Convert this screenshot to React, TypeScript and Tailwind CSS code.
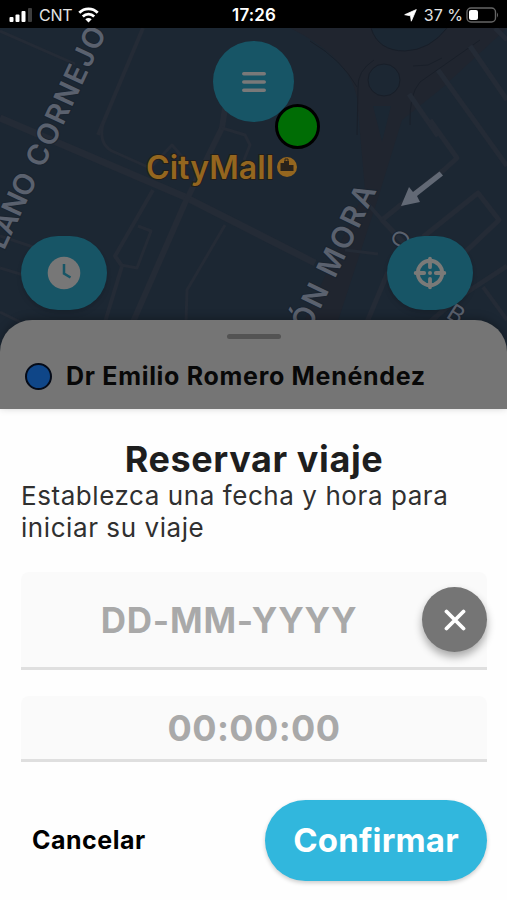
const roads = [
  { d: "M0 31L75 64", w: 3 },
  { d: "M143 28L98 135", w: 4 },
  { d: "M0 118L185 197L315 263", w: 7 },
  { d: "M345 250L378 254", w: 3 },
  { d: "M104 120Q97 143 112 151L150 168L172 145L192 168", w: 3 },
  { d: "M225 108L222 128L185 203L133 322", w: 6 },
  { d: "M222 128L245 135L250 145L244 160", w: 3 },
  { d: "M153 190L115 256L122 266L105 322", w: 4 },
  { d: "M138 226L151 231L137 268L121 265", w: 3 },
  { d: "M225 225L187 290L186 322", w: 3 },
  { d: "M0 236L42 250M0 268L30 277M0 312L20 322", w: 3 },
  { d: "M409 94L438 136", w: 5 },
  { d: "M438 70L507 166", w: 5 },
  { d: "M470 46L507 100", w: 5 },
  { d: "M430 120L457 158L445 169L382 220L404 243", w: 5 },
  { d: "M382 220L366 202", w: 4 },
  { d: "M423 237L478 193L499 220L461 256", w: 5 },
  { d: "M507 266L455 300L430 322", w: 5 },
  { d: "M483 287L507 320", w: 4 },
  { d: "M388 272L367 322", w: 5 },
  { d: "M495 28L507 40", w: 5 },
];

const streets = [
  { name: "LANO", x: 4, y: 251, angle: -65, size: 29, length: 80, weight: 600 },
  { name: "CORNEJO", x: 43, y: 169, angle: -65, size: 29, length: 151, weight: 600 },
  { name: "ÓN MORA", x: 309, y: 333, angle: -64.5, size: 30, length: 158, weight: 600 },
  { name: "O", x: 404, y: 251, angle: -62, size: 23, length: 18, weight: 400 },
  { name: "B", x: 445, y: 317, angle: 32, size: 24, length: 15, weight: 400 },
];

function CityMap() {
  return (
    <svg className="absolute inset-0 h-full w-full" viewBox="0 28 507 381" preserveAspectRatio="none">
      <rect y="28" width="507" height="382" fill="#1c2733" />
      {/* avenue and roundabout */}
      <path d="M290 28C330 48 352 70 357 98L365 190L300 330L335 330L378 198L402 120L442 88L507 28Z" fill="#20252f" />
      <path d="M371 28Q378 51 405 51Q430 50 447 28Z" fill="#1b2733" stroke="#181e28" />
      <path d="M357 135L358 88Q357 71 374 60M410 125Q409 94 420 82L480 40M310 41Q342 60 357 87M413 66L428 65L442 58" fill="none" stroke="#191f29" />
      <path d="M373 106L391 106L382 142Z" fill="#1b2733" />
      <circle cx="384" cy="80" r="16" fill="#1c2733" stroke="#181e28" />
      {roads.map((road) => (
        <path
          key={road.d}
          d={road.d}
          fill="none"
          stroke="#242b36"
          strokeWidth={road.w}
          strokeLinejoin="round"
        />
      ))}
      <g fontFamily="Inter, sans-serif" fill="#5a616e">
        {streets.map((s) => (
          <text
            key={s.name}
            fontSize={s.size}
            fontWeight={s.weight}
            textLength={s.length}
            transform={`translate(${s.x} ${s.y}) rotate(${s.angle})`}
            stroke="#1a2430"
            strokeWidth="2"
            paintOrder="stroke"
          >
            {s.name}
          </text>
        ))}
      </g>
      <path d="M439.500 171.500L443 175.500L417 196L420 202L401 206L409 187L413 192Z" fill="#626975" />
      <text
        x="146"
        y="179"
        fontFamily="Inter, sans-serif"
        fontWeight="600"
        fontSize="32"
        textLength="128"
        fill="#94661f"
        stroke="#211e1b"
        strokeWidth="2"
        paintOrder="stroke"
      >
        CityMall
      </text>
      <circle cx="287" cy="167" r="10" fill="#94661f" />
      <path d="M280.500 171V163H284V161H289V165H293.500V171Z" fill="#29231b" />
      <path d="M285 161V159H288V161M285 166V168M290 167V169" fill="none" stroke="#29231b" />
    </svg>
  );
}

function StatusBar() {
  return (
    <header className="grid h-7 grid-cols-3 items-center bg-black pt-[2px] pr-2 pl-[9px] text-[16px] leading-5 text-[#e4e4e4]">
      <div className="flex items-center gap-[6px]">
        <svg className="h-4 w-[24px]" viewBox="0 0 24 16">
          <rect x="0.500" y="10" width="4" height="5" rx="1" fill="#fff" />
          <rect x="6.500" y="7.500" width="4" height="7.500" rx="1" fill="#fff" />
          <rect x="12.500" y="4" width="4" height="11" rx="1" fill="#fff" />
          <rect x="19" y="1" width="4" height="14" rx="1" fill="#3d3d3d" />
        </svg>
        <span className="w-[33px] tracking-[-0.2px]">CNT</span>
        <svg className="h-4 w-[21px]" viewBox="0 0 21 16" fill="none" stroke="#fff" strokeWidth="2.800">
          <path d="M1.300 5.800C6.500 0.600 14.500 0.600 19.700 5.800" />
          <path d="M4.800 9.400C8 6.300 13 6.300 16.200 9.400" />
          <path d="M10.500 15.500L7.300 12.200Q10.500 9.600 13.700 12.200Z" fill="#fff" stroke="none" />
        </svg>
      </div>
      <span className="text-center text-[17px] font-semibold tracking-[0.1px] text-white">17:26</span>
      <div className="flex items-center justify-end gap-[3px]">
        <svg className="mr-1 size-[13px]" viewBox="0 0 13 13" fill="#fff" stroke="#fff" strokeWidth="0.800" strokeLinejoin="round">
          <path d="M12.300 0.600L7.300 12.200L6.500 6.800L0.700 5.700Z" />
        </svg>
        <span className="whitespace-nowrap">37 %</span>
        <svg className="h-4 w-[33px]" viewBox="0 0 33 16">
          <rect x="1" y="1" width="28.500" height="14" rx="4" fill="none" stroke="#666" strokeWidth="1.400" />
          <rect x="3" y="3" width="9" height="10" rx="2" fill="#fff" />
          <path d="M31 5.500Q33 8 31 10.500Z" fill="#666" />
        </svg>
      </div>
    </header>
  );
}

function MapButtons() {
  return (
    <>
      <button className="absolute top-[13px] left-[213px] flex size-[81px] items-center justify-center rounded-full bg-[#175566]">
        <svg className="h-[22px] w-[26px]" viewBox="0 0 26 22" stroke="#797979" strokeWidth="3.600" strokeLinecap="round">
          <path d="M2.800 2.800H23.200M2.800 11H23.200M2.800 19.200H23.200" />
        </svg>
      </button>
      <div className="absolute top-[76px] left-[275px] size-[45px] rounded-full border-3 border-black bg-[#006d05]" />
      <button className="absolute top-[208px] left-[21px] flex h-[74px] w-[86px] items-center justify-center rounded-[37px] bg-[#175566] shadow-md">
        <svg className="size-[34px]" viewBox="0 0 34 34">
          <circle cx="17" cy="17" r="16.300" fill="#777" />
          <path d="M17 8V17.500L23.500 21.500" fill="none" stroke="#175566" strokeWidth="2.500" />
        </svg>
      </button>
      <button className="absolute top-[208px] left-[387px] flex h-[74px] w-[86px] items-center justify-center rounded-[37px] bg-[#175566] shadow-md">
        <svg className="size-[34px]" viewBox="0 0 32 32" fill="none" stroke="#7a7a78">
          <circle cx="16" cy="16" r="11.500" strokeWidth="3.600" />
          <path
            d="M16 2.500V10.500M16 21.500V29.500M2.500 16H10.500M21.500 16H29.500"
            strokeWidth="3.600"
            strokeLinecap="round"
          />
          <circle cx="16" cy="16" r="1.900" fill="#7a7a78" stroke="none" />
        </svg>
      </button>
    </>
  );
}

export default function App() {
  return (
    <div className="flex h-[900px] w-[507px] flex-col overflow-hidden bg-white font-[Inter,sans-serif]">
      <StatusBar />

      <main className="relative flex h-[381px] flex-col justify-end">
        <CityMap />
        <MapButtons />
        <section className="relative flex h-[89px] flex-col items-center rounded-t-[32px] bg-[#757575] pt-[14px] shadow-[0_-2px_8px_#0004]">
          <div className="h-[5px] w-[54px] rounded-full bg-[#535353]" />
          <div className="mt-[21px] flex w-full items-center gap-[14px] pl-[25px]">
            <span className="size-[27px] shrink-0 rounded-full border-2 border-[#050b18] bg-[#0f4688]" />
            <span className="text-[25px] leading-8 font-bold tracking-[0.7px] whitespace-nowrap text-[#080808]">
              Dr Emilio Romero Menéndez
            </span>
          </div>
        </section>
      </main>

      <section className="flex flex-1 flex-col bg-[#fefefe] pt-[29px] pr-[20px] pl-[21px]">
        <h1 className="text-center text-[36px] leading-[42px] font-bold tracking-[0.6px] text-[#1e1e1e]">
          Reservar viaje
        </h1>
        <p className="text-[26px] leading-8 tracking-[0.57px] whitespace-nowrap text-[#303030]">
          Establezca una fecha y hora para
          <br />
          iniciar su viaje
        </p>

        <div className="mt-[28px] flex h-[98px] items-center rounded-t-lg border-b-3 border-[#dfdfdf] bg-[#fafafa]">
          <span className="flex-1 pt-[2px] pl-[15px] text-center text-[35px] font-bold tracking-[0.8px] text-[#a9a9a9]">
            DD-MM-YYYY
          </span>
          <button className="flex size-[65px] items-center justify-center rounded-full bg-[#757575] shadow-[0_5px_8px_#0005]">
            <svg className="size-[22px]" viewBox="0 0 22 22" stroke="#fff" strokeWidth="3.800" strokeLinecap="round">
              <path d="M2.500 2.500L19.500 19.500M19.500 2.500L2.500 19.500" />
            </svg>
          </button>
        </div>

        <div className="mt-[26px] flex h-[66px] items-center justify-center rounded-t-lg border-b-3 border-[#dfdfdf] bg-[#fafafa] pt-[1px] text-[36px] font-bold tracking-[0.4px] text-[#a9a9a9]">
          00:00:00
        </div>

        <div className="mt-[38px] flex items-center justify-between">
          <button className="pl-[11px] text-[25px] font-bold tracking-[0.5px] text-black">Cancelar</button>
          <button className="flex h-[81px] w-[222px] items-center justify-center rounded-full bg-[#31b7dd] pt-[1px] text-[33px] font-bold tracking-[0.2px] text-white shadow-[0_2px_4px_#0003]">
            Confirmar
          </button>
        </div>
      </section>
    </div>
  );
}
